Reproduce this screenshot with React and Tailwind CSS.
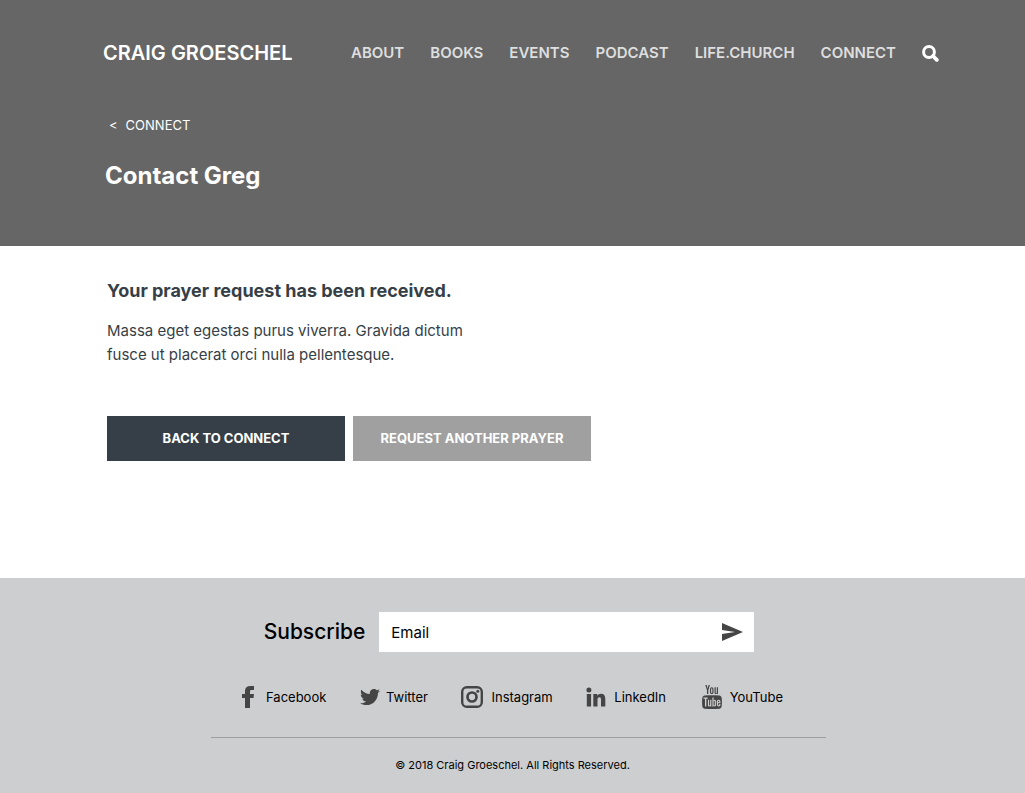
import { useState } from 'react'
import { FaTwitter } from 'react-icons/fa'
import { TfiYoutube } from 'react-icons/tfi'

const NAV_ITEMS = [
  { label: 'ABOUT', href: '#about' },
  { label: 'BOOKS', href: '#books' },
  { label: 'EVENTS', href: '#events' },
  { label: 'PODCAST', href: '#podcast' },
  { label: 'LIFE.CHURCH', href: '#life-church' },
  { label: 'CONNECT', href: '#connect' },
]

const SOCIAL_ITEMS = [
  { label: 'Facebook', href: '#facebook', icon: FacebookIcon, size: 'w-3 h-[22px] mr-3' },
  { label: 'Twitter', href: '#twitter', icon: FaTwitter, size: 'w-5 h-5 mr-1.5' },
  { label: 'Instagram', href: '#instagram', icon: InstagramIcon, size: 'w-[22px] h-[22px] mr-2' },
  { label: 'LinkedIn', href: '#linkedin', icon: LinkedInIcon, size: 'w-5 h-5 mr-2' },
  { label: 'YouTube', href: '#youtube', icon: TfiYoutube, size: 'w-6 h-6 mr-1.5' },
]

function FacebookIcon({ className }) {
  return (
    <svg viewBox="0 0 12 22" fill="currentColor" className={className} aria-hidden="true">
      <path d="M12 0v4H9.6C8.3 4 8 4.6 8 5.6V8h4l-.5 4H8v10H3V12H0V8h3V5C3 1.700 5 0 8.300 0z" />
    </svg>
  )
}

function InstagramIcon({ className }) {
  return (
    <svg viewBox="0 0 22 22" fill="none" stroke="currentColor" className={className} aria-hidden="true">
      <rect x="1.2" y="1.2" width="19.6" height="19.6" rx="4.6" strokeWidth="2.4" />
      <circle cx="11" cy="11" r="4.5" strokeWidth="2.7" />
      <circle cx="16.8" cy="5.3" r="1.5" fill="currentColor" stroke="none" />
    </svg>
  )
}

function LinkedInIcon({ className }) {
  return (
    <svg viewBox="0 0 20 20" fill="currentColor" className={className} aria-hidden="true">
      <circle cx="2.9" cy="2.9" r="2.5" />
      <path d="M.8 7h4.300v12.500H.8zM7.300 7h4v1.700C12.200 7.400 13.400 6.700 15 6.700c3 0 4.300 1.900 4.300 5v7.800H15v-7c0-1.500-.5-2.300-1.700-2.300-1.300 0-1.800.9-1.800 2.400v6.900H7.300z" />
    </svg>
  )
}

function SearchIcon() {
  return (
    <svg viewBox="0 0 17 17" fill="none" stroke="currentColor" className="w-[17px] h-[17px]" aria-hidden="true">
      <circle cx="7" cy="7" r="5.4" strokeWidth="3" />
      <path d="M11 11l3.800 3.800" strokeWidth="3.800" strokeLinecap="round" />
    </svg>
  )
}

function SendIcon() {
  return (
    <svg viewBox="0 0 21 18" fill="currentColor" className="w-[21px] h-[18px]" aria-hidden="true">
      <path d="M0 0l21 9L0 18v-7l13-2L0 7z" />
    </svg>
  )
}

function Header() {
  return (
    <header className="bg-[#666666] text-white pt-[41px] pb-[54px]">
      <div className="flex items-center justify-between pl-[103px] pr-[86px] h-6">
        <a href="#home" className="text-xl leading-6 font-semibold">CRAIG GROESCHEL</a>
        <nav className="flex items-center gap-[26px] text-[15px] leading-6 font-semibold text-[#dedede]">
          {NAV_ITEMS.map(it => (
            <a key={it.label} href={it.href} className="hover:text-white">{it.label}</a>
          ))}
          <button aria-label="Search" className="text-white"><SearchIcon /></button>
        </nav>
      </div>
      <div className="px-[105px] mt-12">
        <a href="#connect" className="flex gap-2 pl-1 text-[13px] leading-6"><span>&lt;</span>CONNECT</a>
        <h1 className="mt-[23px] text-2xl leading-8 font-bold">Contact Greg</h1>
      </div>
    </header>
  )
}

function Footer() {
  const [email, setEmail] = useState('')
  return (
    <footer className="bg-[#cdced0] text-black pt-[34px] pb-5">
      <form className="flex items-center justify-center gap-[14px] pr-[7px]" onSubmit={e => e.preventDefault()}>
        <label htmlFor="email" className="text-[21px] leading-6 font-medium">Subscribe</label>
        <div className="flex items-center w-[375px] h-10 bg-white pr-[11px]">
          <input id="email" type="email" placeholder="Email" value={email} onChange={e => setEmail(e.target.value)} className="flex-1 h-full px-3 text-[15px] outline-none placeholder:text-black" />
          <button aria-label="Send" className="text-[#454545]"><SendIcon /></button>
        </div>
      </form>
      <div className="flex justify-between max-w-[541px] mx-auto mt-[33px]">
        {SOCIAL_ITEMS.map(it => (
          <a key={it.label} href={it.href} className="flex items-center text-[13px] leading-6">
            <it.icon className={`text-[#454545] ${it.size}`} />{it.label}
          </a>
        ))}
      </div>
      <div className="pl-[11px] mt-7">
        <hr className="max-w-[615px] mx-auto border-[#a0a0a0]" />
      </div>
      <p className="mt-[19px] text-center text-[11px] leading-4">© 2018 Craig Groeschel. All Rights Reserved.</p>
    </footer>
  )
}

export default function App() {
  return (
    <div className="min-h-screen flex flex-col bg-white font-['Inter',sans-serif]">
      <Header />
      <main className="flex-1 px-[107px] pt-[33px] text-[#363f47]">
        <h2 className="text-lg leading-6 font-bold">Your prayer request has been received.</h2>
        <p className="mt-4 max-w-[370px] text-[15px] leading-6">Massa eget egestas purus viverra. Gravida dictum fusce ut placerat orci nulla pellentesque.</p>
        <div className="flex gap-2 mt-[49px] text-[13px] font-bold text-white">
          <button className="w-[238px] h-[45px] bg-[#363f47]">BACK TO CONNECT</button>
          <button className="w-[238px] h-[45px] bg-[#a0a0a0]">REQUEST ANOTHER PRAYER</button>
        </div>
      </main>
      <Footer />
    </div>
  )
}
